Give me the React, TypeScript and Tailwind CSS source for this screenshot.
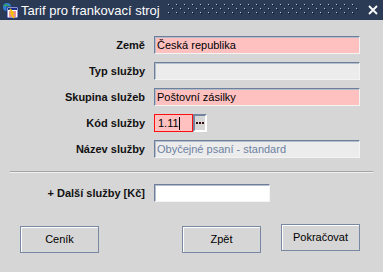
import React from 'react';

const font = { fontFamily: '"Liberation Sans", Arial, sans-serif' };

const fieldBase =
  'h-[18px] border border-t-[#6e7f9b] border-l-[#6e7f9b] border-r-[#f4f4f4] border-b-[#f4f4f4] shadow-[inset_1px_1px_0_#b4bdcc] px-[2px] text-[11px] leading-[16px] flex items-center';

const AppIcon = () => (
  <svg width="17" height="17" viewBox="0 0 17 17">
    <circle cx="5" cy="5" r="4" fill="#2f7fd8" />
    <path d="M2 4 Q4 2 6 4 T9 5" stroke="#3aa84a" strokeWidth="1.5" fill="none" />
    <rect x="5" y="5" width="11" height="11" fill="#fff" stroke="#1b2f8a" />
    <rect x="6" y="6" width="9" height="2" fill="#1b2f8a" />
    <path d="M7 10h7M7 12h7M7 14h7" stroke="#d22" strokeWidth="1" />
    <path d="M8 7 L11 11 L9 11 L12 16" stroke="#f2c400" strokeWidth="1.6" fill="none" />
  </svg>
);

const Grip = () => (
  <svg className="flex-1 h-[12px] mx-[8px]" preserveAspectRatio="none">
    <defs>
      <pattern id="grip" width="8" height="8" patternUnits="userSpaceOnUse">
        <rect x="0" y="0" width="1" height="1" fill="#b9c3d6" />
        <rect x="1" y="1" width="1" height="1" fill="#0c1220" />
        <rect x="4" y="4" width="1" height="1" fill="#b9c3d6" />
        <rect x="5" y="5" width="1" height="1" fill="#0c1220" />
      </pattern>
    </defs>
    <rect width="100%" height="100%" fill="url(#grip)" />
  </svg>
);

const Label = ({ children }: { children: React.ReactNode }) => (
  <div className="h-[18px] flex items-center justify-end text-[11px] font-bold text-[#111]">{children}</div>
);

const Btn = ({ children, className = '' }: { children: React.ReactNode; className?: string }) => (
  <button
    className={`w-[79px] h-[27px] bg-[#d6d6d6] border border-[#7888a2] shadow-[inset_1px_1px_0_#ffffff] text-[11px] text-black ${className}`}
    style={font}
  >
    {children}
  </button>
);

export default function App() {
  return (
    <div className="w-[383px] h-[272px] bg-[#d6d6d6] flex flex-col overflow-hidden" style={font}>
      {/* title bar */}
      <div className="h-[20px] bg-[#2b3a55] flex items-center pl-[2px] pr-[5px] text-white">
        <AppIcon />
        <span className="ml-[2px] text-[13px] leading-none">Tarif pro frankovací stroj</span>
        <Grip />
        <svg width="10" height="10" viewBox="0 0 10 10">
          <path d="M1 1 L9 9 M9 1 L1 9" stroke="#fff" strokeWidth="1.8" />
        </svg>
      </div>

      {/* form */}
      <div className="grid grid-cols-[145px_206px] gap-x-[9px] gap-y-[8px] mt-[16px]">
        <Label>Země</Label>
        <div className={`${fieldBase} bg-[#ffc0c0] text-black`}>Česká republika</div>

        <Label>Typ služby</Label>
        <div className={`${fieldBase} bg-[#ececec]`}></div>

        <Label>Skupina služeb</Label>
        <div className={`${fieldBase} bg-[#ffc0c0] text-black`}>Poštovní zásilky</div>

        <Label>Kód služby</Label>
        <div className="flex h-[18px]">
          <div className="w-[39px] h-[18px] border border-[#ff1010] bg-[#ffc0c0] text-[11px] flex items-center px-[3px] text-black">
            1.11<span className="w-px h-[13px] bg-black"></span>
          </div>
          <div className="w-[14px] h-[18px] border-2 border-t-[#7483a0] border-l-[#7483a0] border-r-white border-b-white bg-[#d6d6d6] flex items-center justify-center gap-[1px]">
            <span className="w-[2px] h-[2px] bg-[#3a1010]"></span>
            <span className="w-[2px] h-[2px] bg-[#3a1010]"></span>
            <span className="w-[2px] h-[2px] bg-[#3a1010]"></span>
          </div>
        </div>

        <Label>Název služby</Label>
        <div className={`${fieldBase} bg-[#ececec] text-[#6d82a3]`}>Obyčejné psaní - standard</div>
      </div>

      <div className="mx-[10px] mt-[13px] border-t border-t-[#a4a4a4] border-b border-b-[#f2f2f2]"></div>

      <div className="grid grid-cols-[145px_116px] gap-x-[9px] mt-[11px]">
        <Label>+ Další služby [Kč]</Label>
        <div className={`${fieldBase} bg-white`}></div>
      </div>

      <div className="flex items-start mt-[24px] pl-[20px]">
        <Btn>Ceník</Btn>
        <Btn className="ml-[83px]">Zpět</Btn>
        <Btn className="ml-[20px] -mt-[2px]">Pokračovat</Btn>
      </div>
    </div>
  );
}
